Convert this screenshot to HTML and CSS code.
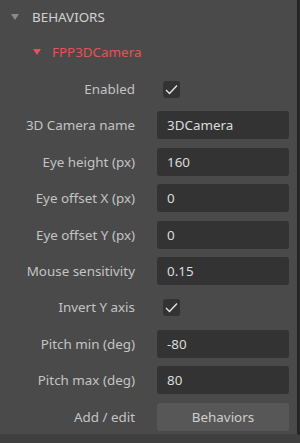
FILE: index.html
```html
<!DOCTYPE html>
<html lang="en">
  <head>
    <meta charset="UTF-8" />
    <title>Behaviors</title>
    <link rel="stylesheet" href="styles.css">
  </head>
  <body>
    <div class="panel">
      <div class="section">
        <span class="arrow grey"></span>
        <span class="title">BEHAVIORS</span>
      </div>
      <div class="behavior">
        <span class="arrow red"></span>
        <span class="name">FPP3DCamera</span>
      </div>

      <div class="props">
        <label>Enabled</label>
        <div><span class="check"><svg width="13" height="11" viewBox="0 0 13 11"><path d="M1 6 L4.5 9.5 L12 1.5" fill="none" stroke="#e8e8e8" stroke-width="1.3"/></svg></span></div>

        <label>3D Camera name</label>
        <div class="field">3DCamera</div>

        <label>Eye height (px)</label>
        <div class="field">160</div>

        <label>Eye offset X (px)</label>
        <div class="field">0</div>

        <label>Eye offset Y (px)</label>
        <div class="field">0</div>

        <label>Mouse sensitivity</label>
        <div class="field">0.15</div>

        <label>Invert Y axis</label>
        <div><span class="check"><svg width="13" height="11" viewBox="0 0 13 11"><path d="M1 6 L4.5 9.5 L12 1.5" fill="none" stroke="#e8e8e8" stroke-width="1.3"/></svg></span></div>

        <label>Pitch min (deg)</label>
        <div class="field">-80</div>

        <label>Pitch max (deg)</label>
        <div class="field">80</div>

        <label>Add / edit</label>
        <div class="field button">Behaviors</div>
      </div>
    </div>
  </body>
</html>
```

FILE: styles.css
```css
html, body {
  margin: 0;
  height: 100%;
}

body {
  background-color: #3f3f3f;
  font-family: "Noto Sans", "Open Sans", sans-serif;
  font-size: 13.4px;
  color: #c4c4c4;
  overflow: hidden;
}

.panel {
  height: 434px;
  background-color: #4a4a4a;
  border-right: 3px solid #262626;
  border-bottom: 1px solid #404040;
}

.section {
  display: flex;
  align-items: center;
  height: 34px;
  padding-left: 11px;
  gap: 13px;
  color: #d2d2d2;
}

.behavior {
  display: flex;
  align-items: center;
  height: 36px;
  padding-left: 33px;
  gap: 11px;
  color: #e35454;
}

.arrow {
  width: 0;
  height: 0;
  border-left: 4px solid transparent;
  border-right: 4px solid transparent;
  border-top: 6px solid #8a8a8a;
}

.arrow.red {
  border-top-color: #e35454;
}

.props {
  display: grid;
  grid-template-columns: 135px 132px;
  column-gap: 22px;
  row-gap: 8.4px;
  padding-top: 5px;
}

.props label {
  display: flex;
  align-items: center;
  justify-content: flex-end;
  height: 28px;
}

.props > div {
  display: flex;
  align-items: center;
  height: 28px;
}

.field {
  background-color: #333333;
  border-radius: 3px;
  padding-left: 10px;
  color: #dcdcdc;
}

.field.button {
  background-color: #575757;
  justify-content: center;
  padding-left: 0;
  color: #cfcfcf;
}

.check {
  display: flex;
  align-items: center;
  justify-content: center;
  width: 17px;
  height: 17px;
  margin-left: 6px;
  background-color: #333333;
  border-radius: 3px;
}
```
